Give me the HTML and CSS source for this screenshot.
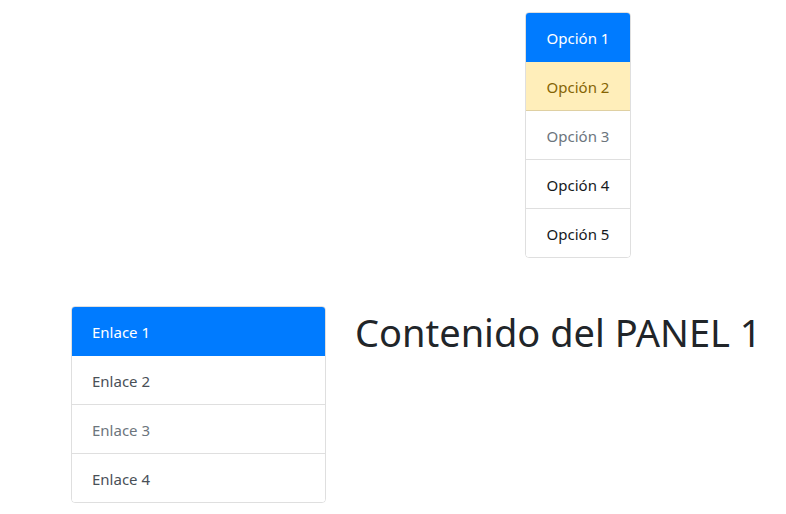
FILE: index.html
```html
<!DOCTYPE html>
<html lang="es">
<head>
<meta charset="utf-8">
<title>Listas</title>
<link rel="stylesheet" href="styles.css">
</head>
<body>
  <div class="top">
    <ul class="list-group list-center">
      <li class="item active">Opción 1</li>
      <li class="item warning">Opción 2</li>
      <li class="item muted">Opción 3</li>
      <li class="item dark">Opción 4</li>
      <li class="item dark">Opción 5</li>
    </ul>
  </div>
  <div class="bottom">
    <ul class="list-group list-left">
      <li class="item active">Enlace 1</li>
      <li class="item action">Enlace 2</li>
      <li class="item muted">Enlace 3</li>
      <li class="item action">Enlace 4</li>
    </ul>
    <div class="panel">
      <h1 class="panel-title">Contenido del PANEL 1</h1>
    </div>
  </div>
</body>
</html>
```
FILE: styles.css
```css
* { box-sizing: border-box; }
html, body { margin: 0; padding: 0; background: #fff; }
body {
  font-family: "Noto Sans", "Open Sans", sans-serif;
  font-size: 15px;
  line-height: 24px;
  color: #212529;
}
.top {
  padding-top: 12px;
  padding-left: 525px;
}
.list-group {
  list-style: none;
  margin: 0;
  padding: 0;
  border: 1px solid rgba(0,0,0,.125);
  border-radius: 4px;
  overflow: hidden;
}
.item {
  padding: 13px 20px 11px;
  height: 49px;
  border-bottom: 1px solid rgba(0,0,0,.125);
  background: #fff;
}
.item:last-child { border-bottom: none; height: 48px; }
.item.active {
  background: #007bff;
  color: #fff;
  border-bottom-color: #007bff;
  height: 49px;
}
.list-group .item.active:first-child { margin: -1px -1px 0; height: 50px; padding-top: 14px; padding-left: 21px; padding-right: 21px; }
.warning { background: #ffeeba; color: #856404; border-bottom-color: rgba(0,0,0,.125); }
.muted { color: #6c757d; }
.dark { color: #16191c; }
.action { color: #495057; }
.list-center { width: 106px; text-align: center; }
.bottom {
  display: flex;
  align-items: flex-start;
  margin-top: 48px;
  padding-left: 71px;
  gap: 29px;
}
.list-left { width: 255px; flex: none; }
.panel { flex: 1; }
.panel-title {
  margin: 0;
  padding-top: 2px;
  font-size: 38px;
  font-weight: 400;
  line-height: 48px;
  color: #212529;
}
```
